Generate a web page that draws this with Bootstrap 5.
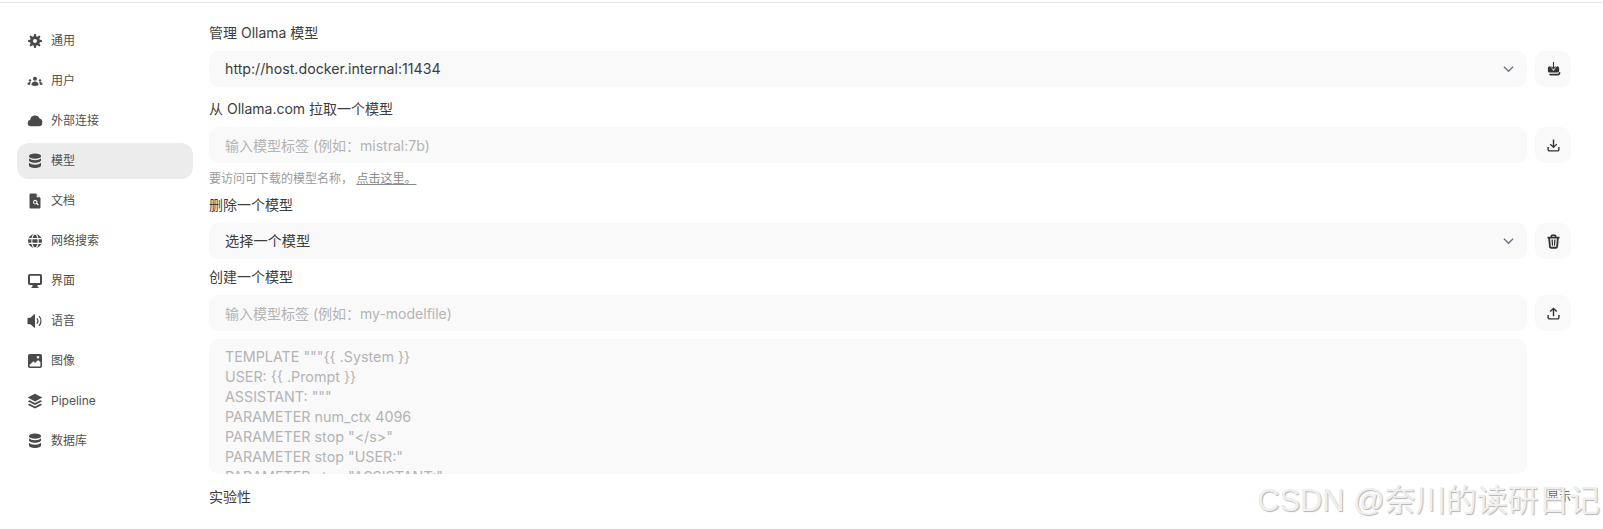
<!DOCTYPE html>
<html lang="zh-CN">
<head>
    <meta charset="UTF-8">
    <meta name="viewport" content="width=device-width, initial-scale=1.0">
    <title>设置</title>
    <link href="https://cdn.jsdelivr.net/npm/bootstrap@5.3.0/dist/css/bootstrap.min.css" rel="stylesheet">
    <style>
        html, body {
            height: 100%;
            overflow: hidden;
        }
        body {
            background: #fff;
            color: #3d3d3d;
            font-family: Inter, "Noto Sans CJK SC", sans-serif;
            font-size: 14px;
            padding-top: 2px;
        }
        .settings-wrap {
            border-top: 1px solid #e6e6e6;
            padding: 20px 32px 0 17px;
            gap: 16px;
            position: relative;
            height: 100%;
        }
        /* sidebar */
        .side-menu {
            width: 176px;
            flex: none;
            gap: 4px;
        }
        .side-item {
            height: 36px;
            padding: 0 10px;
            gap: 8px;
            border-radius: 12px;
            color: #505050;
            font-size: 12px;
            text-decoration: none;
        }
        .side-item.is-active {
            background: #ececec;
        }
        .side-item svg {
            width: 16px;
            height: 16px;
            flex: none;
            fill: #4a4a4a;
        }
        /* main column */
        .field-label {
            font-size: 14px;
            line-height: 20px;
            color: #3d3d3d;
        }
        .label-gap {
            margin-top: 12px;
        }
        .field-row {
            gap: 8px;
        }
        .soft-input.form-control,
        .soft-input.form-select {
            height: 36px;
            border: 0;
            border-radius: 10px;
            background-color: #f9f9f9;
            color: #3d3d3d;
            font-size: 14px;
            padding: 0 16px;
            box-shadow: none;
        }
        .soft-input.form-select {
            font-size: 14.2px;
            background-image: url("data:image/svg+xml,%3csvg xmlns='http://www.w3.org/2000/svg' viewBox='0 0 12 8'%3e%3cpath fill='none' stroke='%236b7280' stroke-width='1.5' d='M1 1.500l5 5 5-5'/%3e%3c/svg%3e");
            background-size: 11px 8px;
            background-position: right 13px center;
        }
        .soft-input::placeholder,
        .soft-area::placeholder {
            color: #b4b4b4;
            opacity: 1;
        }
        .soft-area.form-control {
            height: 135px;
            border: 0;
            border-radius: 10px;
            background: #f9f9f9;
            font-size: 14.3px;
            line-height: 20px;
            padding: 8px 16px 0;
            resize: none;
            overflow: hidden;
            box-shadow: none;
        }
        .square-btn.btn {
            width: 36px;
            height: 36px;
            flex: none;
            padding: 0;
            border: 0;
            border-radius: 10px;
            background: #f9f9f9;
        }
        .square-btn svg {
            width: 15px;
            height: 15px;
            fill: #333;
        }
        .hint-line {
            font-size: 12px;
            line-height: 16px;
            color: #9b9b9b;
        }
        .hint-line a {
            color: #8a8a8a;
        }
        .lab-row {
            margin-top: 13px;
        }
        .show-link {
            font-size: 12px;
            color: #666;
        }
        .csdn-mark {
            position: absolute;
            right: 3px;
            bottom: 9px;
            font-family: "Liberation Sans", "Noto Sans CJK SC", sans-serif;
            font-size: 30.8px;
            line-height: 38px;
            white-space: nowrap;
            color: #efefef;
            text-shadow: 1px 1px 1px #b5b5b5;
            pointer-events: none;
        }
    </style>
</head>
<body>
    <div class="settings-wrap d-flex align-items-start">
        <!-- Sidebar -->
        <nav class="side-menu d-flex flex-column">
            <a href="#" class="side-item d-flex align-items-center">
                <svg viewBox="0 0 16 16"><path fill-rule="evenodd" d="M6.955 1.45A.5.5 0 0 1 7.452 1h1.096a.5.5 0 0 1 .497.45l.17 1.699c.484.12.94.312 1.356.562l1.321-1.081a.5.5 0 0 1 .67.033l.774.775a.5.5 0 0 1 .034.67l-1.08 1.32c.25.417.44.873.561 1.357l1.699.17a.5.5 0 0 1 .45.497v1.096a.5.5 0 0 1-.45.497l-1.699.17c-.12.484-.312.94-.562 1.356l1.082 1.322a.5.5 0 0 1-.034.67l-.774.774a.5.5 0 0 1-.67.033l-1.322-1.08c-.416.25-.872.44-1.356.561l-.17 1.699a.5.5 0 0 1-.497.45H7.452a.5.5 0 0 1-.497-.45l-.17-1.699a4.973 4.973 0 0 1-1.356-.562L4.108 13.37a.5.5 0 0 1-.67-.033l-.774-.775a.5.5 0 0 1-.034-.67l1.08-1.32a4.971 4.971 0 0 1-.561-1.357l-1.699-.17A.5.5 0 0 1 1 8.548V7.452a.5.5 0 0 1 .45-.497l1.699-.17c.12-.484.312-.94.562-1.356L2.629 4.107a.5.5 0 0 1 .034-.67l.774-.774a.5.5 0 0 1 .67-.033L5.43 3.71a4.97 4.97 0 0 1 1.356-.561l.17-1.699ZM6 8a2 2 0 1 0 4 0 2 2 0 0 0-4 0Z"/></svg>
                <span>通用</span>
            </a>
            <a href="#" class="side-item d-flex align-items-center">
                <svg viewBox="0 0 16 16"><circle cx="8" cy="5.800" r="2"/><circle cx="3" cy="7.400" r="1.200"/><circle cx="13" cy="7.400" r="1.200"/><path d="M4.400 12.100C4.400 9.900 6 8.500 8 8.500s3.600 1.400 3.600 3.600c0 .4-1.500.8-3.600.8s-3.600-.4-3.600-.8Z"/><path d="M.4 11.400c0-1.400 1-2.300 2.400-2.300.4 0 .7.100 1 .2-.5.700-.7 1.500-.7 2.500-1.400 0-2.700-.1-2.700-.4Zm15.200 0c0-1.400-1-2.300-2.400-2.300-.4 0-.7.100-1 .2.500.7.700 1.500.7 2.500 1.400 0 2.700-.1 2.700-.4Z"/></svg>
                <span>用户</span>
            </a>
            <a href="#" class="side-item d-flex align-items-center">
                <svg viewBox="0 0 16 16"><path d="M.7 10a3.300 3.300 0 0 1 2.500-3.200 4.900 4.900 0 0 1 9.400-1.200A3.600 3.600 0 0 1 15.300 9.600 3.500 3.500 0 0 1 12 13.300H4.100A3.300 3.300 0 0 1 .7 10Z"/></svg>
                <span>外部连接</span>
            </a>
            <a href="#" class="side-item is-active d-flex align-items-center">
                <svg viewBox="0 0 16 16"><ellipse cx="8" cy="3.200" rx="6" ry="2.600"/><path d="M2 5.300v2c0 1.400 2.700 2.500 6 2.500s6-1.100 6-2.500v-2C12.800 6.600 10.500 7.200 8 7.200s-4.800-.6-6-1.900Z"/><path d="M2 9.800v2.800c0 1.400 2.700 2.500 6 2.500s6-1.100 6-2.500V9.800c-1.200 1.300-3.500 1.900-6 1.900s-4.800-.6-6-1.900Z"/></svg>
                <span>模型</span>
            </a>
            <a href="#" class="side-item d-flex align-items-center">
                <svg viewBox="0 0 16 16"><path fill-rule="evenodd" d="M2.500 1.700A1.200 1.200 0 0 1 3.700.5H9l4.500 4.500v9.300a1.200 1.200 0 0 1-1.200 1.200H3.700a1.200 1.200 0 0 1-1.200-1.200V1.700ZM9.500 7.200a2.200 2.200 0 1 0-.1 3.700l1.500 1.500.9-.9-1.500-1.500a2.200 2.200 0 0 0-.8-2.800ZM8.200 8a1.200 1.200 0 1 1 0 2.400 1.200 1.200 0 0 1 0-2.400Z"/><path d="M9.700 1.400v2.900h2.900L9.700 1.400Z" fill="#fff"/></svg>
                <span>文档</span>
            </a>
            <a href="#" class="side-item d-flex align-items-center">
                <svg viewBox="0 0 16 16"><circle cx="8" cy="8" r="7"/><g fill="none" stroke="#fff" stroke-width="1.100"><ellipse cx="8" cy="8" rx="3.200" ry="7"/><path d="M1.500 5.600h13M1.500 10.400h13"/></g></svg>
                <span>网络搜索</span>
            </a>
            <a href="#" class="side-item d-flex align-items-center">
                <svg viewBox="0 0 16 16"><path fill-rule="evenodd" d="M2.800 1h10.400A1.800 1.800 0 0 1 15 2.800v7.400A1.800 1.800 0 0 1 13.200 12H10.500v1.500l1.500 1.500H4l1.500-1.500V12H2.800A1.800 1.800 0 0 1 1 10.200V2.800A1.800 1.800 0 0 1 2.800 1Zm.2 1.800V10h10V2.800H3Z"/></svg>
                <span>界面</span>
            </a>
            <a href="#" class="side-item d-flex align-items-center">
                <svg viewBox="0 0 16 16"><path d="M8 1.800v12.400c0 .6-.6.800-1 .4L3.500 11.200H1.300C.8 11.200.5 10.900.5 10.400V5.600c0-.5.300-.8.800-.8h2.200L7 1.400c.4-.4 1-.2 1 .4Z"/><path d="M10.200 5a4.400 4.400 0 0 1 0 6l-.9-.8a3.200 3.200 0 0 0 0-4.400l.9-.8Z"/><path d="M12.500 2.800a7.600 7.600 0 0 1 0 10.400l-.9-.8a6.400 6.400 0 0 0 0-8.800l.9-.8Z"/></svg>
                <span>语音</span>
            </a>
            <a href="#" class="side-item d-flex align-items-center">
                <svg viewBox="0 0 16 16"><path fill-rule="evenodd" d="M2.800 1h10.400A1.800 1.800 0 0 1 15 2.800v10.400a1.800 1.800 0 0 1-1.800 1.800H2.800A1.800 1.800 0 0 1 1 13.200V2.800A1.800 1.800 0 0 1 2.800 1ZM2.600 11.800v1.200c0 .3.200.5.500.5h9.800c.3 0 .5-.2.500-.5V9.200l-2.300-2.300-3 3L6.500 8.300 2.600 11.800ZM11 3a1.300 1.300 0 1 0 0 2.600A1.300 1.300 0 0 0 11 3Z"/></svg>
                <span>图像</span>
            </a>
            <a href="#" class="side-item d-flex align-items-center">
                <svg viewBox="0 0 16 16"><path d="M8 .8 15.300 4.600 8 8.400.7 4.600 8 .8Z"/><path d="m2.600 7.200-1.900 1L8 12l7.300-3.800-1.900-1L8 10 2.600 7.200Z"/><path d="m2.600 10.700-1.900 1L8 15.500l7.300-3.800-1.900-1L8 13.500l-5.400-2.800Z"/></svg>
                <span>Pipeline</span>
            </a>
            <a href="#" class="side-item d-flex align-items-center">
                <svg viewBox="0 0 16 16"><ellipse cx="8" cy="3.200" rx="6" ry="2.600"/><path d="M2 5.300v2c0 1.400 2.700 2.500 6 2.500s6-1.100 6-2.500v-2C12.800 6.600 10.500 7.200 8 7.200s-4.800-.6-6-1.900Z"/><path d="M2 9.800v2.800c0 1.400 2.700 2.500 6 2.500s6-1.100 6-2.500V9.800c-1.200 1.300-3.500 1.900-6 1.900s-4.800-.6-6-1.900Z"/></svg>
                <span>数据库</span>
            </a>
        </nav>

        <!-- Main -->
        <main class="flex-grow-1 d-flex flex-column">
            <div class="field-label">管理 Ollama 模型</div>
            <div class="field-row d-flex mt-2">
                <select class="form-select soft-input">
                    <option>http://host.docker.internal:11434</option>
                </select>
                <button class="btn square-btn d-flex align-items-center justify-content-center" type="button" aria-label="更新">
                    <svg viewBox="0 0 16 16"><path d="M7.400 0h1.200v5.800l1.300-1.300.8.8L8 8.100 5.300 5.300l.8-.8 1.300 1.300V0Z"/><path d="M2 6.500C2 5.300 3 4.400 4.200 4.400h.2L8 9.600l3.600-5.200h.2c1.200 0 2.200.9 2.200 2.100v2.700c0 1.200-1 2.100-2.200 2.100H4.200C3 11.300 2 10.400 2 9.200V6.500Z"/><path d="M3.400 12.500h8.800c1.100 0 1.800-.7 1.800-1.800h1.200v1.200c0 1.400-1 2.400-2.400 2.400H4.800c-.8 0-1.400-.7-1.400-1.800Z"/></svg>
                </button>
            </div>
            <div class="field-label label-gap">从 Ollama.com 拉取一个模型</div>
            <div class="field-row d-flex mt-2">
                <input class="form-control soft-input" placeholder="输入模型标签 (例如：mistral:7b)">
                <button class="btn square-btn d-flex align-items-center justify-content-center" type="button" aria-label="拉取">
                    <svg viewBox="0 0 16 16"><path d="M7.250 1.500h1.500v6.700l2.200-2.200 1.050 1.050L8 11 3.999 7.050 5.050 6l2.200 2.200V1.500Z"/><path d="M1.500 9.500H3v2.800c0 .4.300.7.700.7h8.600c.4 0 .7-.3.700-.7V9.500h1.500v2.800c0 1.200-1 2.200-2.200 2.200H3.700c-1.200 0-2.200-1-2.200-2.200V9.500Z"/></svg>
                </button>
            </div>
            <div class="hint-line mt-2">要访问可下载的模型名称， <a href="#">点击这里。</a></div>
            <div class="field-label mt-2">删除一个模型</div>
            <div class="field-row d-flex mt-2">
                <select class="form-select soft-input">
                    <option>选择一个模型</option>
                </select>
                <button class="btn square-btn d-flex align-items-center justify-content-center" type="button" aria-label="删除">
                    <svg viewBox="0 0 16 16"><path fill-rule="evenodd" d="M4.800 3V2.400C4.800 1.100 5.800.4 7 .4h2c1.200 0 2.200.7 2.200 2V3h3.200v1.900h-.8l-.8 8.700c-.1 1.200-1 2-2.200 2H5.400c-1.200 0-2.100-.8-2.200-2l-.8-8.700h-.8V3h3.200Zm1.900 0h2.600v-.6c0-.1-.1-.2-.3-.2H7c-.2 0-.3.100-.3.2V3ZM4.400 4.900l.7 8.500c0 .2.200.3.400.3h5c.2 0 .4-.1.400-.3l.7-8.500H4.400Zm1.500 1h1.400l.2 6.500H6.300L5.900 5.900Zm2.800 0h1.400l-.4 6.500H8.500l.2-6.500Z"/></svg>
                </button>
            </div>
            <div class="field-label mt-2">创建一个模型</div>
            <div class="field-row d-flex mt-2">
                <input class="form-control soft-input" placeholder="输入模型标签 (例如：my-modelfile)">
                <button class="btn square-btn d-flex align-items-center justify-content-center" type="button" aria-label="上传">
                    <svg viewBox="0 0 16 16"><path d="M7.250 11V4.300L5.050 6.500 3.999 5.450 8 1.500l4 3.950-1.050 1.050-2.200-2.200V11h-1.500Z"/><path d="M1.500 9.500H3v2.800c0 .4.300.7.700.7h8.600c.4 0 .7-.3.700-.7V9.500h1.500v2.800c0 1.200-1 2.200-2.200 2.200H3.700c-1.200 0-2.200-1-2.200-2.200V9.500Z"/></svg>
                </button>
            </div>
            <div class="field-row d-flex mt-2">
                <textarea class="form-control soft-area" placeholder="TEMPLATE &quot;&quot;&quot;{{ .System }}&#10;USER: {{ .Prompt }}&#10;ASSISTANT: &quot;&quot;&quot;&#10;PARAMETER num_ctx 4096&#10;PARAMETER stop &quot;&lt;/s&gt;&quot;&#10;PARAMETER stop &quot;USER:&quot;&#10;PARAMETER stop &quot;ASSISTANT:&quot;"></textarea>
                <div class="square-btn btn invisible"></div>
            </div>
            <div class="d-flex justify-content-between align-items-center lab-row">
                <div class="field-label">实验性</div>
                <div class="show-link">显示</div>
            </div>
        </main>

        <div class="csdn-mark">CSDN @奈川的读研日记</div>
    </div>

    <script src="https://cdn.jsdelivr.net/npm/bootstrap@5.3.0/dist/js/bootstrap.bundle.min.js"></script>
</body>
</html>
